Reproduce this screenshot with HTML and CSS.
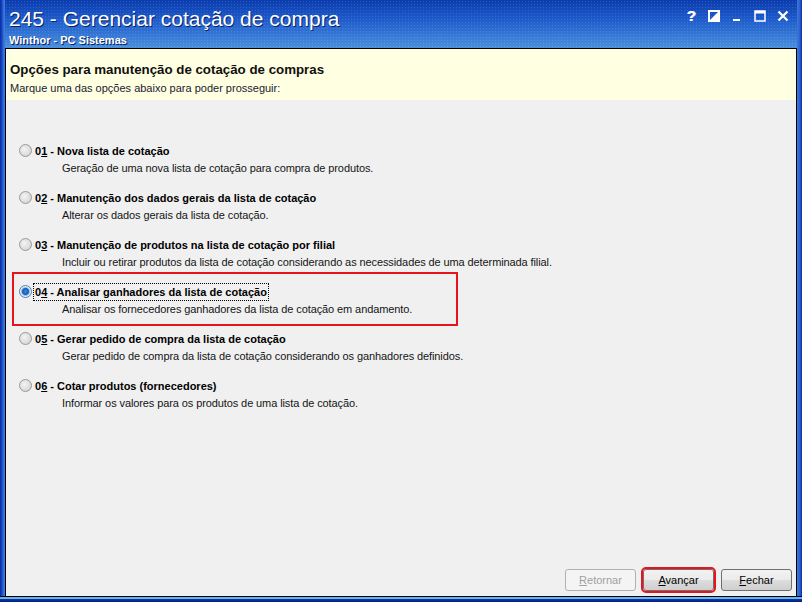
FILE: index.html
```html
<!DOCTYPE html>
<html lang="pt-BR">
<head>
  <meta charset="UTF-8">
  <meta name="viewport" content="width=device-width, initial-scale=1.0">
  <title>245 - Gerenciar cotação de compra</title>
  <link rel="stylesheet" href="styles.css">
</head>
<body>
  <div class="window">
    <!-- Title bar -->
    <div class="titlebar">
      <div class="titles">
        <div class="title">245 - Gerenciar cotação de compra</div>
        <div class="subtitle">Winthor - PC Sistemas</div>
      </div>
      <div class="controls">
        <span class="ctl help">?</span>
        <svg class="ctl" width="12" height="12" viewBox="0 0 12 12">
          <rect x="1" y="1" width="10" height="10" fill="none" stroke="#fff" stroke-width="2"/>
          <polygon points="1,11 11,1 11,11" fill="#fff"/>
        </svg>
        <svg class="ctl" width="12" height="12" viewBox="0 0 12 12">
          <rect x="2" y="9" width="7" height="2" fill="#fff"/>
        </svg>
        <svg class="ctl" width="12" height="12" viewBox="0 0 12 12">
          <rect x="1" y="1" width="10" height="10" fill="none" stroke="#fff" stroke-width="1.5"/>
          <rect x="1" y="1" width="10" height="2.5" fill="#fff"/>
        </svg>
        <svg class="ctl" width="12" height="12" viewBox="0 0 12 12">
          <path d="M1.5 1.5 L10.5 10.5 M10.5 1.5 L1.5 10.5" stroke="#fff" stroke-width="2.2"/>
        </svg>
      </div>
    </div>

    <!-- Client area -->
    <div class="client">
      <div class="header">
        <h1>Opções para manutenção de cotação de compras</h1>
        <p>Marque uma das opções abaixo para poder prosseguir:</p>
      </div>

      <div class="options">
        <div class="option">
          <span class="radio"></span>
          <div class="text">
            <div class="label">0<u>1</u> - Nova lista de cotação</div>
            <div class="desc">Geração de uma nova lista de cotação para compra de produtos.</div>
          </div>
        </div>
        <div class="option">
          <span class="radio"></span>
          <div class="text">
            <div class="label">0<u>2</u> - Manutenção dos dados gerais da lista de cotação</div>
            <div class="desc">Alterar os dados gerais da lista de cotação.</div>
          </div>
        </div>
        <div class="option">
          <span class="radio"></span>
          <div class="text">
            <div class="label">0<u>3</u> - Manutenção de produtos na lista de cotação por filial</div>
            <div class="desc">Incluir ou retirar produtos da lista de cotação considerando as necessidades de uma determinada filial.</div>
          </div>
        </div>
        <div class="option marked">
          <span class="radio checked"></span>
          <div class="text">
            <div class="label focus">0<u>4</u> - Analisar ganhadores da lista de cotação</div>
            <div class="desc">Analisar os fornecedores ganhadores da lista de cotação em andamento.</div>
          </div>
        </div>
        <div class="option">
          <span class="radio"></span>
          <div class="text">
            <div class="label">0<u>5</u> - Gerar pedido de compra da lista de cotação</div>
            <div class="desc">Gerar pedido de compra da lista de cotação considerando os ganhadores definidos.</div>
          </div>
        </div>
        <div class="option">
          <span class="radio"></span>
          <div class="text">
            <div class="label">0<u>6</u> - Cotar produtos (fornecedores)</div>
            <div class="desc">Informar os valores para os produtos de uma lista de cotação.</div>
          </div>
        </div>
      </div>

      <div class="footer">
        <button class="btn" disabled><u>R</u>etornar</button>
        <button class="btn marked"><u>A</u>vançar</button>
        <button class="btn"><u>F</u>echar</button>
      </div>
    </div>
  </div>
</body>
</html>
```

FILE: styles.css
```css
* {
  box-sizing: border-box;
  margin: 0;
  padding: 0;
}

body {
  width: 802px;
  height: 602px;
  overflow: hidden;
  font-family: "Liberation Sans", Arial, sans-serif;
  font-size: 11px;
  color: #000;
}

.window {
  width: 802px;
  height: 602px;
  display: flex;
  flex-direction: column;
  background: linear-gradient(to right, #0a2a9c 0, #1848c8 2px, #3a7ad8 4px, #3a7ad8 5px, transparent 5px),
              linear-gradient(to left, #0a2a9c 0, #2a5ed0 2px, #3a7ad8 5px, transparent 5px),
              linear-gradient(to bottom, #0b3cae 0, #1f5ccc 20px, #4a8fdc 48px, #5ea6e6 100%);
  padding: 0 5px 6px 5px;
  position: relative;
}

.window::after {
  content: "";
  position: absolute;
  left: 0;
  right: 0;
  bottom: 0;
  height: 6px;
  background: linear-gradient(to bottom, #000 0, #000 1px, #6ab4ec 1px, #6ab4ec 3px, #0a3aa8 3px, #061c80 6px);
}

/* Title bar */
.titlebar {
  height: 48px;
  display: flex;
  justify-content: space-between;
  align-items: flex-start;
  color: #fff;
  padding: 7px 0 0 4px;
  background:
    radial-gradient(circle, rgba(255,255,255,0.12) 0.6px, transparent 0.8px) 0 0 / 3px 3px;
}

.title {
  font-size: 21px;
  line-height: 23px;
  text-shadow: 1px 1px 0 #0a2060;
}

.subtitle {
  font-size: 11px;
  font-weight: bold;
  line-height: 14px;
  margin-top: 3px;
  text-shadow: 1px 1px 0 #0a2060;
}

.controls {
  display: flex;
  align-items: center;
  gap: 11px;
  padding: 2px 8px 0 0;
}

.ctl {
  width: 12px;
  height: 14px;
  display: block;
}

.help {
  font-size: 15px;
  font-weight: bold;
  line-height: 14px;
  text-align: center;
  color: #fff;
  text-shadow: 1px 0 0 #d0c8ff;
}

/* Client */
.client {
  flex: 1;
  display: flex;
  flex-direction: column;
  background: #f0f0f0;
  border: 1px solid #000;
  border-bottom: none;
}

.header {
  background: #ffffe1;
  height: 51px;
  padding: 12px 0 0 3px;
  border-left: 1px solid #fff;
}

.header h1 {
  font-size: 13.3px;
  font-weight: bold;
  line-height: 17px;
  color: #101010;
}

.header p {
  font-size: 11px;
  line-height: 14px;
  margin-top: 3px;
  color: #1a1a30;
}

.options {
  padding: 42px 0 0 13px;
  display: flex;
  flex-direction: column;
  gap: 13px;
}

.option {
  display: flex;
  align-items: flex-start;
  gap: 1px;
  position: relative;
}

.option.marked::after {
  content: "";
  position: absolute;
  left: -7px;
  top: -11px;
  width: 442px;
  height: 50px;
  border: 2px solid #e8141b;
}

.radio {
  width: 13px;
  height: 13px;
  margin-top: 2px;
  border-radius: 50%;
  border: 1px solid #9a9a9a;
  background: radial-gradient(circle at 40% 40%, #f4f4f4 0, #d8d8d8 70%, #c8c8c8 100%);
}

.radio.checked {
  background: radial-gradient(circle, #3a8ee0 0, #1a5cb8 3px, #8cc0ec 4px, #e8f2fb 5px, #d8d8d8 100%);
  border-color: #5a7ea8;
}

.text {
  display: flex;
  flex-direction: column;
}

.label {
  font-weight: bold;
  font-size: 11px;
  line-height: 16px;
  padding: 0 1px;
  align-self: flex-start;
  border: 1px dotted transparent;
}

.label.focus {
  border-color: #000;
}

.desc {
  line-height: 16px;
  padding-left: 29px;
  color: #151515;
  letter-spacing: -0.1px;
}

/* Buttons */
.footer {
  margin-top: auto;
  display: flex;
  justify-content: flex-end;
  gap: 7px;
  padding: 0 4px 5px 0;
}

.btn {
  width: 71px;
  height: 22px;
  font-family: "Liberation Sans", Arial, sans-serif;
  font-size: 11px;
  color: #000;
  border: 1px solid #707070;
  border-radius: 3px;
  background: linear-gradient(to bottom, #f2f2f2 0, #ebebeb 50%, #dddddd 51%, #cfcfcf 100%);
  position: relative;
}

.btn:disabled {
  color: #a0a0a0;
  border-color: #adb2b5;
  background: #f4f4f4;
}

.btn.marked {
  outline: 2px solid #e8141b;
  outline-offset: 0;
}
```
